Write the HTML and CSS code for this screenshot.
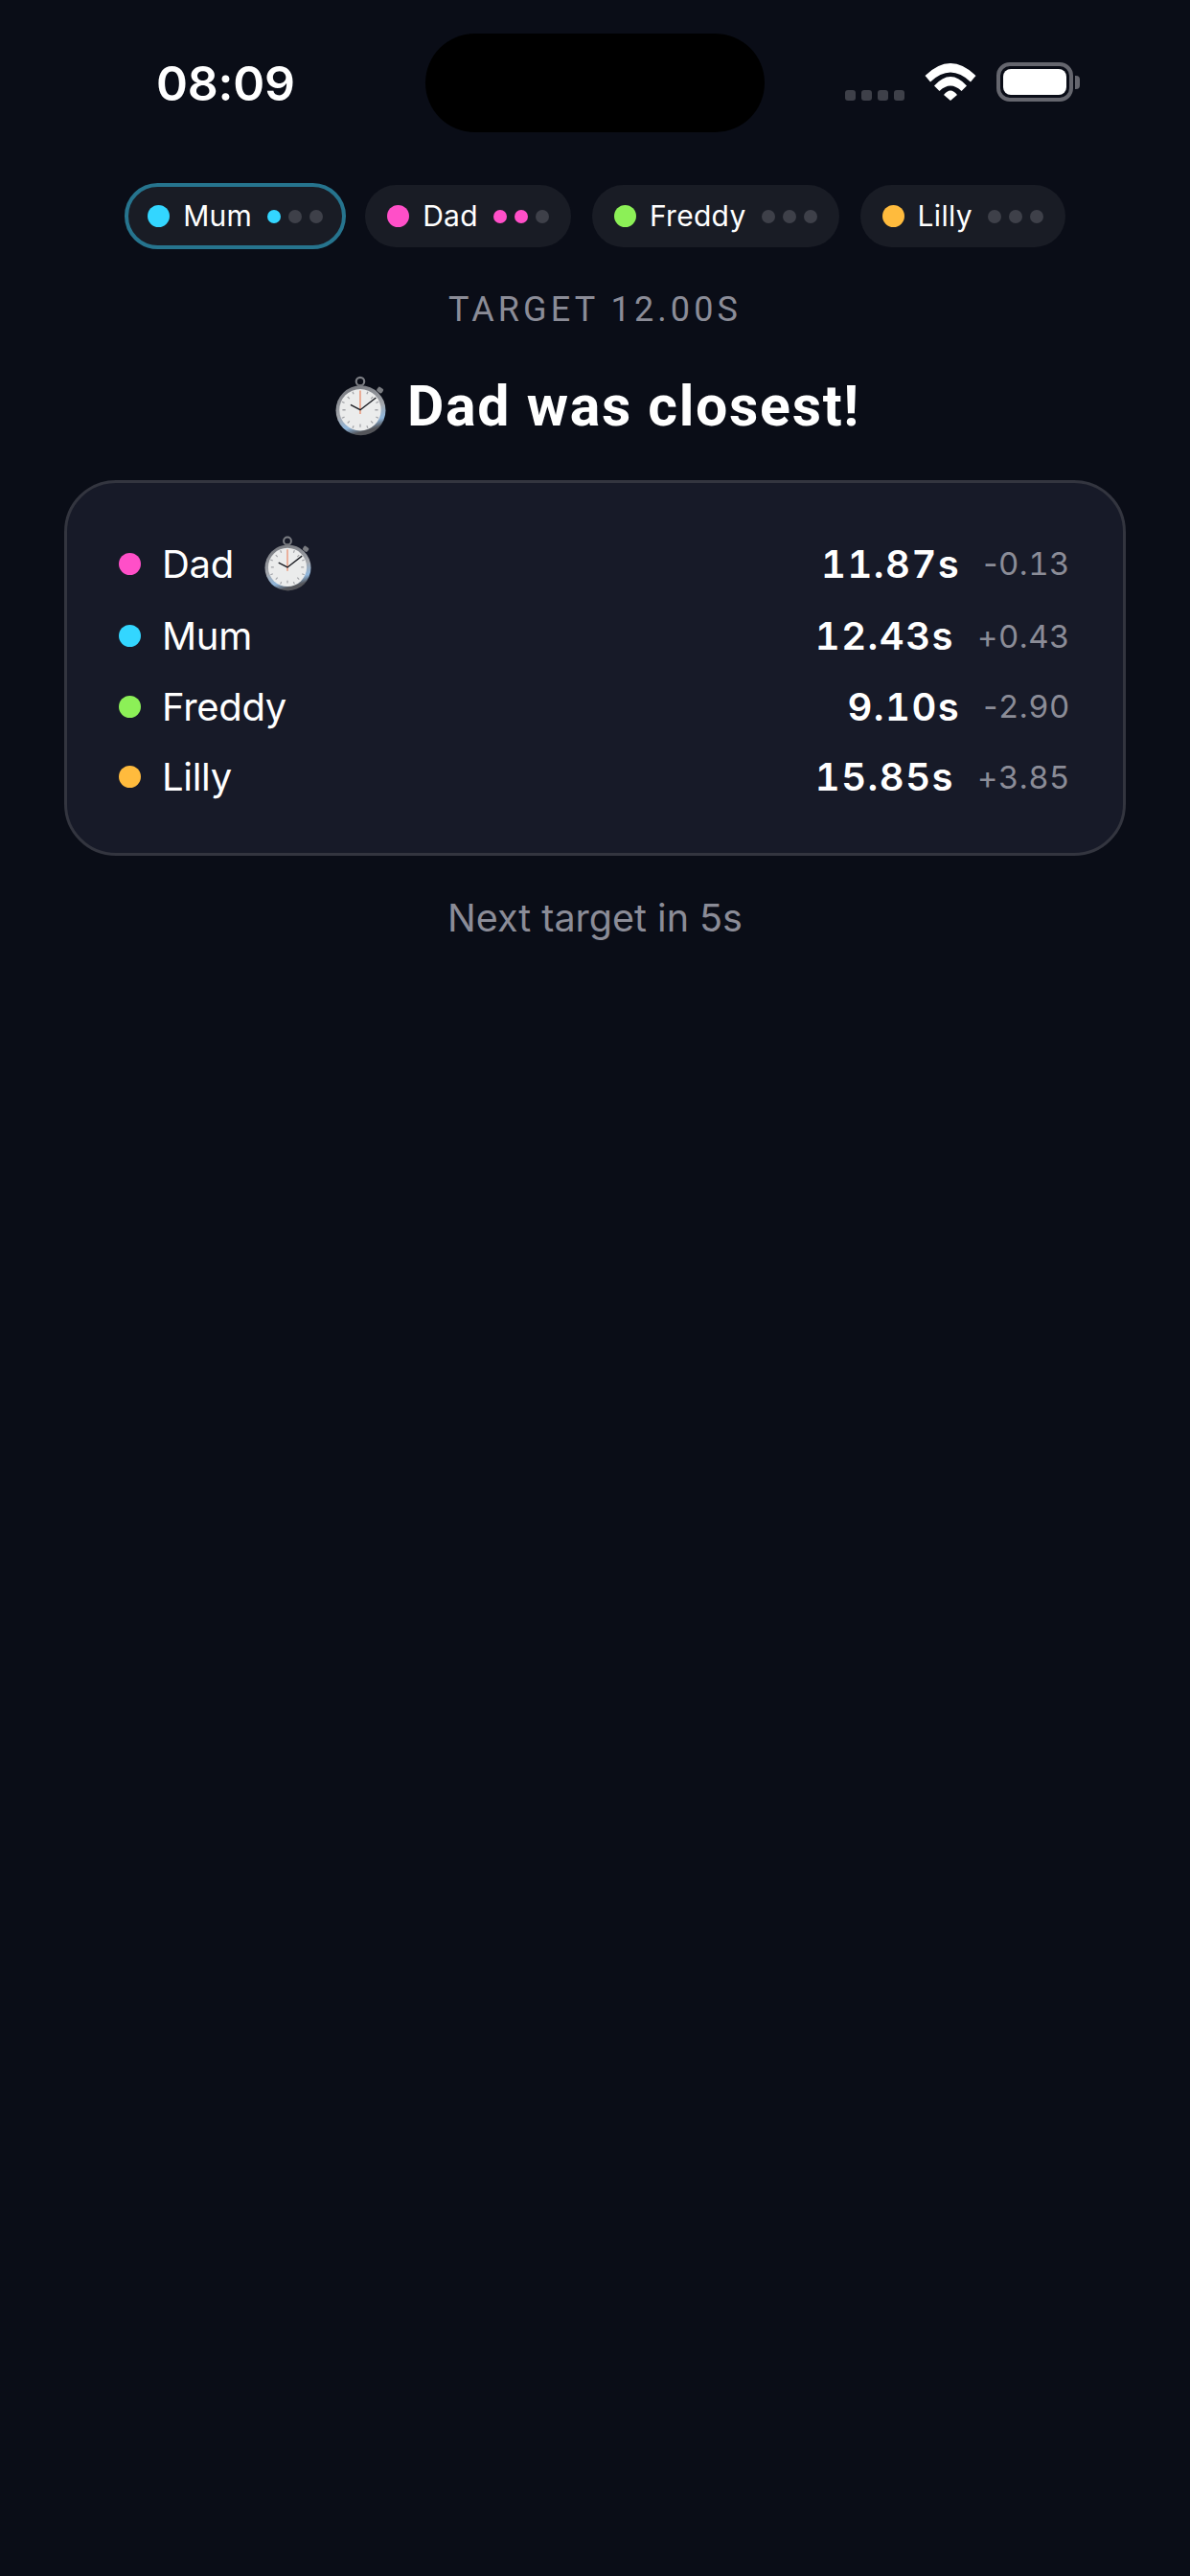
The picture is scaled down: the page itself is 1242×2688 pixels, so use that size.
FILE: index.html
```html
<!DOCTYPE html>
<html lang="en">
<head>
    <meta charset="UTF-8">
    <meta name="viewport" content="width=device-width, initial-scale=1.0">
    <title>Closest to the target</title>
    <link rel="stylesheet" href="styles.css">
</head>
<body>

<svg class="defs" width="0" height="0">
    <defs>
        <linearGradient id="caseGrad" x1="0" y1="0" x2="0.3" y2="1">
            <stop offset="0" stop-color="#6f7177"/>
            <stop offset="0.6" stop-color="#a4a7ad"/>
            <stop offset="0.85" stop-color="#8fb6dc"/>
            <stop offset="1" stop-color="#54555a"/>
        </linearGradient>
        <symbol id="stopwatch" viewBox="0 0 50 58">
            <circle cx="24.500" cy="5" r="4" fill="none" stroke="#7d7f85" stroke-width="2"/>
            <rect x="22" y="8" width="5" height="3" fill="#6c6e73"/>
            <rect x="41" y="11" width="6" height="5" rx="1.500" transform="rotate(35 44 13.500)" fill="#7a7c81"/>
            <circle cx="25" cy="33.500" r="24.500" fill="url(#caseGrad)"/>
            <circle cx="24.500" cy="33" r="20.500" fill="#ebecec"/>
            <path d="M24.500 50v-3M7 33h3M42 33h-3M12 20l2 2M37 46l-2-2M12 46l2-2M37 20l-2 2M17 15l1 2.500M32 15l-1 2.500M17 51l1-2.500M32 51l-1-2.500M6.500 25l2.500 1M42.500 25l-2.500 1M6.500 41l2.500-1M42.500 41l-2.500-1" stroke="#a3a4a8" stroke-width="1.200"/>
            <path d="M24.500 14V37" stroke="#e8744a" stroke-width="1"/>
            <path d="M15 28L24.500 33L40 21" fill="none" stroke="#1c1e24" stroke-width="1.400"/>
        </symbol>
    </defs>
</svg>

<header class="status-bar">
    <span class="clock">08:09</span>
    <div class="island"></div>
    <div class="status-icons">
        <div class="signal"><i></i><i></i><i></i><i></i></div>
        <svg class="wifi" width="54" height="39" viewBox="0 0 54 39">
            <path d="M0.500 13Q27 -13 53.500 13L48 19.500Q27 -0.500 6 19.500Z" fill="#fff"/>
            <path d="M10 23.500Q27 4.500 44 23.500L38.500 29Q27 18 15.500 29Z" fill="#fff"/>
            <path d="M20 33Q27 24 34 33L27 39Z" fill="#fff"/>
        </svg>
        <div class="battery">
            <div class="battery-fill"></div>
        </div>
        <div class="battery-cap"></div>
    </div>
</header>

<nav class="players">
    <div class="pill active">
        <span class="dot cyan"></span>
        <span class="pill-name">Mum</span>
        <span class="wins"><i class="cyan"></i><i></i><i></i></span>
    </div>
    <div class="pill">
        <span class="dot pink"></span>
        <span class="pill-name">Dad</span>
        <span class="wins"><i class="pink"></i><i class="pink"></i><i></i></span>
    </div>
    <div class="pill">
        <span class="dot green"></span>
        <span class="pill-name">Freddy</span>
        <span class="wins"><i></i><i></i><i></i></span>
    </div>
    <div class="pill">
        <span class="dot amber"></span>
        <span class="pill-name">Lilly</span>
        <span class="wins"><i></i><i></i><i></i></span>
    </div>
</nav>

<p class="target">TARGET 12.00S</p>

<h1 class="headline">
    <svg class="watch-big"><use href="#stopwatch"/></svg>
    <span>Dad was closest!</span>
</h1>

<section class="results">
    <div class="row first">
        <span class="dot pink"></span>
        <span class="name">Dad</span>
        <svg class="watch-small"><use href="#stopwatch"/></svg>
        <span class="time">11.87s</span>
        <span class="delta"><span class="sign">-</span>0.13</span>
    </div>
    <div class="row">
        <span class="dot cyan"></span>
        <span class="name">Mum</span>
        <span class="time">12.43s</span>
        <span class="delta">+0.43</span>
    </div>
    <div class="row">
        <span class="dot green"></span>
        <span class="name">Freddy</span>
        <span class="time">9.10s</span>
        <span class="delta"><span class="sign">-</span>2.90</span>
    </div>
    <div class="row">
        <span class="dot amber"></span>
        <span class="name">Lilly</span>
        <span class="time">15.85s</span>
        <span class="delta">+3.85</span>
    </div>
</section>

<p class="next">Next target in 5s</p>

</body>
</html>
```

FILE: styles.css
```css
body {
    font-family: 'Inter', sans-serif;
    margin: 0;
    height: 2688px;
    overflow: hidden;
    background-color: #0a0d17;
    color: #fff;
}

.defs {
    display: block;
    height: 0;
}

.status-bar {
    display: grid;
    grid-template-columns: 444px 354px 1fr;
    align-items: center;
    padding-top: 35px;
    height: 103px;
}

.clock {
    padding-left: 163px;
    font-size: 50px;
    font-weight: 600;
    letter-spacing: -0.2px;
}

.island {
    height: 103px;
    border-radius: 52px;
    background-color: #000;
}

.status-icons {
    display: flex;
    align-self: end;
    align-items: flex-end;
    padding-left: 84px;
    margin-bottom: 32px;
}

.signal {
    display: flex;
    gap: 6px;
    margin-bottom: 1px;
}

.signal i {
    width: 11px;
    height: 11px;
    border-radius: 3px;
    background-color: #3e4049;
}

.wifi {
    margin-left: 21px;
    margin-bottom: 1px;
}

.battery {
    margin-left: 21px;
    padding: 3px;
    border: 4px solid #65666e;
    border-radius: 14px;
}

.battery-fill {
    width: 66px;
    height: 27px;
    border-radius: 8px;
    background-color: #fff;
}

.battery-cap {
    width: 5px;
    height: 14px;
    margin: 0 0 13px 2px;
    border-radius: 0 4px 4px 0;
    background-color: #65666e;
}

.players {
    display: flex;
    justify-content: center;
    gap: 22px;
    margin-top: 55px;
    padding-left: 2px;
}

.pill {
    display: flex;
    align-items: center;
    height: 65px;
    padding: 0 23px;
    box-sizing: border-box;
    border-radius: 33px;
    background-color: #191c25;
}

.pill.active {
    height: 69px;
    margin: -2px;
    padding: 0 20px;
    border: 4px solid #26748e;
    border-radius: 35px;
}

.dot {
    flex: none;
    width: 23px;
    height: 23px;
    border-radius: 50%;
}

.cyan { background-color: #33d6ff; }
.pink { background-color: #ff4fc8; }
.green { background-color: #8cf057; }
.amber { background-color: #ffbb3d; }

.pill-name {
    margin: 0 0 2px 14px;
    font-size: 30px;
    letter-spacing: 0.3px;
}

.wins {
    display: flex;
    gap: 8px;
    margin-left: 16px;
}

.wins i {
    width: 14px;
    height: 14px;
    border-radius: 50%;
    background-color: #3e4049;
}

.wins i.cyan { background-color: #33d6ff; }
.wins i.pink { background-color: #ff4fc8; }

.target {
    margin: 44px 0 0;
    text-align: center;
    font-family: 'Roboto', sans-serif;
    font-size: 36px;
    line-height: 43px;
    letter-spacing: 4.1px;
    color: #8b8c97;
}

.headline {
    display: flex;
    justify-content: center;
    align-items: center;
    gap: 22px;
    margin: 47px 0 0;
    padding-left: 6px;
    font-family: 'Roboto', sans-serif;
    font-size: 59px;
    font-weight: 700;
    line-height: 63px;
    letter-spacing: 1.7px;
}

.watch-big {
    width: 53px;
    height: 63px;
}

.results {
    display: flex;
    flex-direction: column;
    margin: 46px 67px 0;
    padding: 45px 55px 42.5px 54px;
    border: 3px solid #33353f;
    border-radius: 54px;
    background-color: #171a28;
}

.row {
    display: flex;
    align-items: center;
    height: 73.5px;
}

.row.first {
    height: 78px;
}

.name {
    margin-left: 22px;
    font-size: 40px;
    letter-spacing: -0.3px;
}

.watch-small {
    width: 49px;
    height: 58px;
    margin-left: 32px;
}

.time {
    margin-left: auto;
    font-size: 40px;
    font-weight: 600;
    letter-spacing: 1.5px;
    font-variant-numeric: tabular-nums;
}

.delta {
    margin-left: 24px;
    font-size: 33px;
    letter-spacing: 0.5px;
    font-variant-numeric: tabular-nums;
    color: #8b8c97;
}

.sign {
    font-variant-numeric: normal;
}

.next {
    margin: 41px 0 0;
    text-align: center;
    font-size: 39.5px;
    color: #8b8c97;
}
```
